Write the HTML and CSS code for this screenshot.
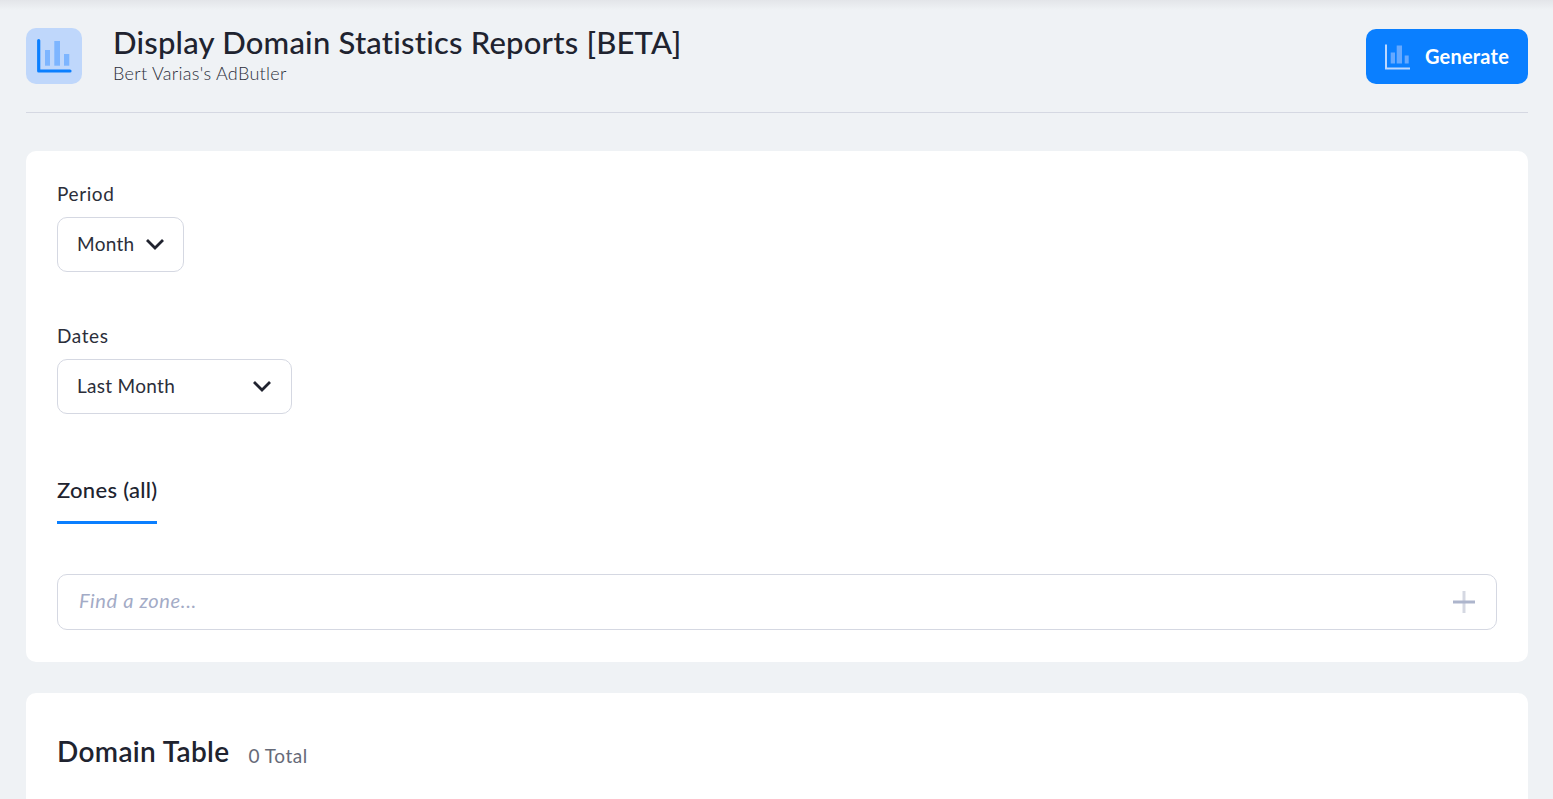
FILE: index.html
```html
<!DOCTYPE html>
<html lang="en">
<head>
<meta charset="utf-8">
<title>Display Domain Statistics Reports [BETA]</title>
<link rel="stylesheet" href="styles.css">
</head>
<body>
<div class="top-shade"></div>
<main class="page">
  <header class="header">
    <div class="header-icon">
      <svg width="56" height="56" viewBox="0 0 56 56">
        <rect class="hi-bar" x="19" y="22" width="5" height="15.700"/>
        <rect class="hi-bar" x="28.300" y="13" width="5.700" height="24.700"/>
        <rect class="hi-bar" x="38" y="26" width="5.300" height="11.700"/>
        <path class="hi-axis" d="M12.700 12.500V43H44"/>
      </svg>
    </div>
    <div class="titles">
      <h1 class="title">Display Domain Statistics Reports [BETA]</h1>
      <div class="subtitle">Bert Varias's AdButler</div>
    </div>
    <button class="generate">
      <svg class="generate-icon" width="26" height="26" viewBox="0 0 26 26">
        <path class="gen-axis" d="M2 0.500V24.500H26"/>
        <rect class="gen-bar" x="6.700" y="8.500" width="4.300" height="11"/>
        <rect class="gen-bar" x="12.700" y="1.500" width="5.300" height="18"/>
        <rect class="gen-bar" x="20.700" y="11.500" width="4" height="8"/>
      </svg>
      <span class="generate-text">Generate</span>
    </button>
  </header>

  <section class="card filters">
    <div class="field">
      <label class="label">Period</label>
      <div class="select select-period"><span>Month</span>
        <svg class="chev" width="20" height="12" viewBox="0 0 20 12"><path d="M2 2l8 8 8-8"/></svg>
      </div>
    </div>
    <div class="field">
      <label class="label">Dates</label>
      <div class="select select-dates"><span>Last Month</span>
        <svg class="chev" width="20" height="12" viewBox="0 0 20 12"><path d="M2 2l8 8 8-8"/></svg>
      </div>
    </div>
    <div class="tabs"><div class="tab">Zones (all)</div></div>
    <div class="finder">
      <span class="placeholder">Find a zone...</span>
      <svg width="24" height="24" viewBox="0 0 24 24"><path class="plus-v" d="M12 1v22"/><path class="plus-h" d="M1 12h22"/></svg>
    </div>
  </section>

  <section class="card table-card">
    <h2 class="table-title">Domain Table</h2>
    <span class="total">0 Total</span>
  </section>
</main>
</body>
</html>
```
FILE: styles.css
```css
* { box-sizing: border-box; }
html, body { margin: 0; height: 799px; overflow: hidden; }
body { background: #eff2f5; font-family: Lato, "Open Sans", sans-serif; color: #20232f; position: relative; }
.top-shade { position: absolute; top: 0; left: 0; right: 0; height: 10px; background: linear-gradient(#e3e5e9, #eff2f5); }
.page { padding: 28px 25px 0 26px; position: relative; height: 799px; overflow: hidden; }
.header { display: flex; align-items: flex-start; height: 85px; border-bottom: 1px solid #d5d8e2; }
.header-icon { width: 56px; height: 56px; border-radius: 10px; background: #bfd7fb; flex: none; }
.header-icon svg { display: block; }
.hi-bar { fill: #7db5ff; }
.hi-axis { fill: none; stroke: #0a7fff; stroke-width: 3.200; stroke-linecap: round; stroke-linejoin: round; }
.titles { margin-left: 31px; flex: 1; }
.title { margin: -4px 0 0; font-size: 31px; line-height: 36px; font-weight: 500; letter-spacing: 0.22px; }
.subtitle { font-size: 18px; line-height: 24px; margin-top: 1px; font-weight: 300; letter-spacing: 0.3px; color: #2b2e3a; }
.generate { width: 162px; height: 55px; margin-top: 1px; border: 0; border-radius: 10px; background: #0a7fff; color: #fff; font: 700 20px Lato, sans-serif; letter-spacing: 0.2px; display: flex; align-items: center; gap: 15px; padding: 0 0 0 18px; }
.generate-text { margin-top: -2px; }
.gen-axis { fill: none; stroke: #bcd8ff; stroke-width: 2; }
.gen-bar { fill: #66a9ff; }
.card { background: #fff; border-radius: 10px; }
.filters { margin-top: 38px; height: 511px; padding: 30px 31px 0; }
.field { margin-bottom: 51px; }
.label { display: block; font-size: 19px; line-height: 26px; margin-bottom: 10px; font-weight: 400; letter-spacing: 0.6px; color: #2b2e3a; }
.select { height: 55px; border: 1px solid #d5d8e2; border-radius: 10px; display: flex; align-items: center; justify-content: space-between; padding: 0 18px 0 19px; font-size: 19px; letter-spacing: 0.3px; color: #2b2e3a; }
.select span { margin-top: -2px; }
.select-period { width: 127px; }
.select-dates { width: 235px; padding-right: 19px; }
.chev { fill: none; margin-top: -2px; }
.chev path { fill: none; stroke: #20232f; stroke-width: 2.800; }
.tabs { margin-top: 0; padding-top: 12px; }
.tab { width: 100px; height: 47px; border-bottom: 3px solid #0a7fff; font-size: 22px; font-weight: 500; line-height: 26px; letter-spacing: 0.3px; white-space: nowrap; }
.finder { margin-top: 50px; height: 56px; border: 1px solid #d5d8e2; border-radius: 10px; display: flex; align-items: center; justify-content: space-between; padding: 0 20px 0 21px; }
.placeholder { font-size: 20px; font-style: italic; color: #a3abc6; margin-top: -5px; letter-spacing: 0.65px; }
.plus-v { stroke: #d5d8e2; stroke-width: 3; }
.plus-h { stroke: #adb5cc; stroke-width: 3; }
.table-card { margin-top: 31px; height: 200px; padding: 40px 31px 0; display: flex; align-items: flex-start; gap: 19px; }
.table-title { margin: 0; font-size: 28px; font-weight: 600; line-height: 36px; letter-spacing: 0.35px; }
.total { font-size: 19px; line-height: 24px; margin-top: 11px; color: #666a78; letter-spacing: 0.55px; }
```
